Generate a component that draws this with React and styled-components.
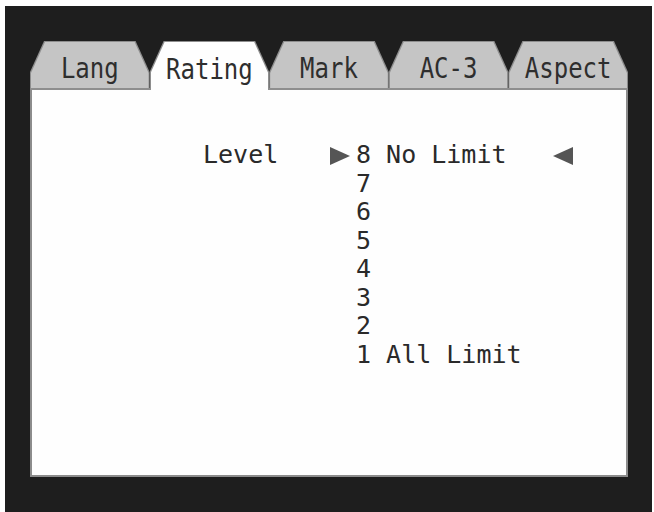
import React from "react";
import styled, { createGlobalStyle } from "styled-components";

const Global = createGlobalStyle`
  html, body { margin: 0; padding: 0; background: #ffffff; }
  * { box-sizing: border-box; }
`;

const Screen = styled.div`
  margin: 6px 2px 0 5px;
  height: 506px;
  background: #1e1e1e;
  padding: 35px 24px 0 25px;
  display: flex;
  flex-direction: column;
  font-family: "DejaVu Sans Mono", "Liberation Mono", monospace;
  color: #2a2a2a;
`;

const TabBar = styled.div`
  display: flex;
  height: 49px;
  background: linear-gradient(to top, #8c8c8c 2px, transparent 2px);
`;

const shape = `polygon(0 100%, 0 31px, 14px 0, calc(100% - 14px) 0, 100% 31px, 100% 100%)`;

const Tab = styled.div`
  flex: 1;
  background: #8e8e8e;
  clip-path: ${shape};
  padding: 1px 1px ${(p) => (p.$active ? 0 : 2)}px;
  display: flex;
`;

const TabFace = styled.div`
  flex: 1;
  background: ${(p) => (p.$active ? "#fefefe" : "#c5c5c5")};
  clip-path: ${shape};
  display: flex;
  align-items: center;
  justify-content: center;
  padding-top: 6px;
`;

const TabLabel = styled.span`
  display: inline-block;
  font-size: 24px;
  line-height: 24px;
  transform: scaleY(1.2);
  color: #2e2e2e;
  white-space: pre;
`;

const Panel = styled.div`
  height: 387px;
  background: #fefefe;
  border: 2px solid #8c8c8c;
  border-top: none;
  padding: 51px 0 0 171px;
`;

const Grid = styled.div`
  display: grid;
  grid-template-columns: 127px 26px 197px 24px;
  grid-auto-rows: 28.5px;
  font-size: 25px;
  line-height: 28.5px;
`;

const Cell = styled.div`
  white-space: pre;
  display: flex;
  align-items: center;
  grid-column: ${(p) => p.$col};
`;

const Arrow = styled.svg`
  width: 20px;
  height: 18px;
  fill: #555555;
  margin-top: 2px;
`;

const tabs = ["Lang", "Rating", "Mark", "AC-3", "Aspect"];
const levels = ["8 No Limit", "7", "6", "5", "4", "3", "2", "1 All Limit"];

export default function App() {
  return (
    <>
      <Global />
      <Screen>
        <TabBar>
          {tabs.map((t) => (
            <Tab key={t} $active={t === "Rating"}>
              <TabFace $active={t === "Rating"}>
                <TabLabel>{t}</TabLabel>
              </TabFace>
            </Tab>
          ))}
        </TabBar>
        <Panel>
          <Grid>
            {levels.map((lv, i) => (
              <React.Fragment key={lv}>
                <Cell $col={1}>{i === 0 ? "Level" : ""}</Cell>
                <Cell $col={2}>
                  {i === 0 && (
                    <Arrow viewBox="0 0 20 18">
                      <polygon points="0,0 20,9 0,18" />
                    </Arrow>
                  )}
                </Cell>
                <Cell $col={3}>{lv}</Cell>
                <Cell $col={4}>
                  {i === 0 && (
                    <Arrow viewBox="0 0 20 18">
                      <polygon points="20,0 0,9 20,18" />
                    </Arrow>
                  )}
                </Cell>
              </React.Fragment>
            ))}
          </Grid>
        </Panel>
      </Screen>
    </>
  );
}
